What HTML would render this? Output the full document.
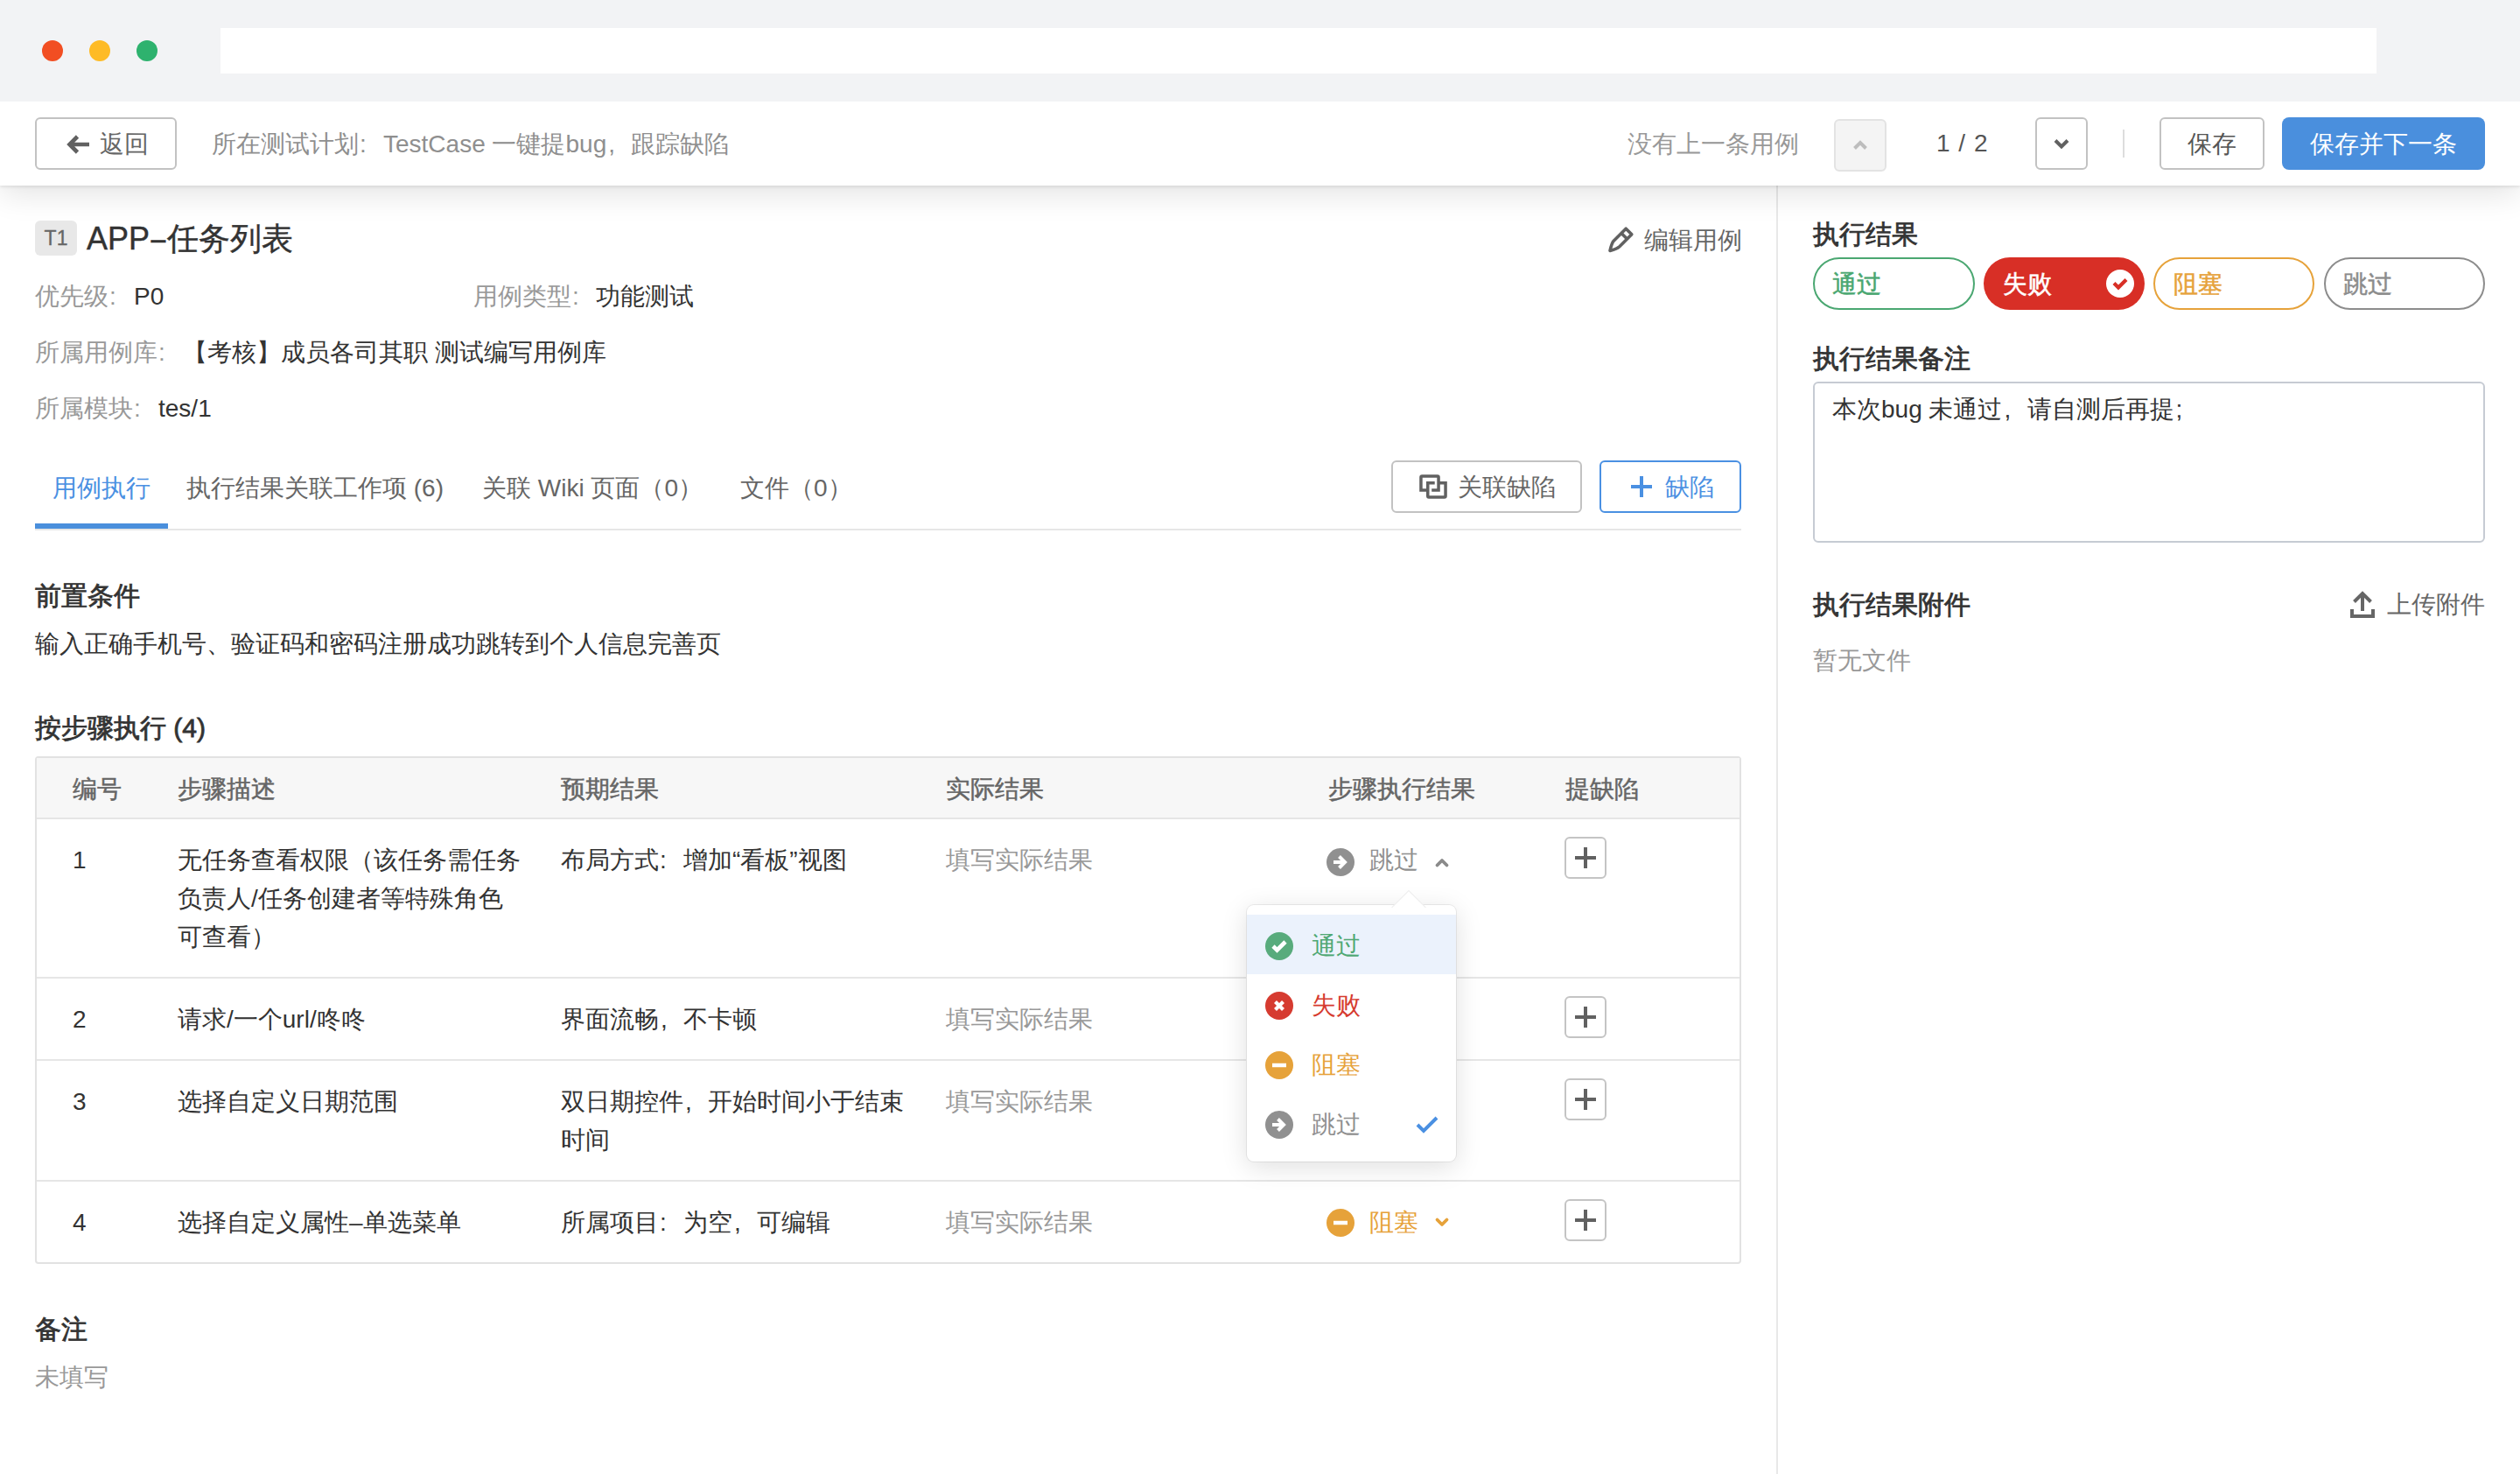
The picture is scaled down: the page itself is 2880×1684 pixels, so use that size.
<!DOCTYPE html>
<html><head><meta charset="utf-8">
<style>
html,body{margin:0;padding:0;}
body{width:2880px;height:1684px;overflow:hidden;position:relative;background:#fff;font-family:"Liberation Sans",sans-serif;font-size:28px;color:#333;}
.a{position:absolute;}
.t{position:absolute;line-height:40px;white-space:nowrap;}
.b{font-weight:bold;}
.h{font-size:30px;-webkit-text-stroke:0.8px currentColor;}
.md{-webkit-text-stroke:0.5px currentColor;}
.cl{display:inline-block;width:28px;text-align:left;text-indent:1px;}
.cm{display:inline-block;width:28px;text-align:left;text-indent:2px;}
.g{color:#999;}
.m{color:#666;}
.btn{position:absolute;box-sizing:border-box;border:2px solid #c2c2c2;border-radius:6px;background:#fff;}
svg{position:absolute;overflow:visible;}
</style></head><body>

<!-- browser chrome -->
<div class="a" style="left:0;top:0;width:2880px;height:116px;background:#f2f3f5;z-index:4;">
<div class="a" style="left:48px;top:46px;width:24px;height:24px;border-radius:50%;background:#f24e22;"></div>
<div class="a" style="left:102px;top:46px;width:24px;height:24px;border-radius:50%;background:#febb26;"></div>
<div class="a" style="left:156px;top:46px;width:24px;height:24px;border-radius:50%;background:#2eb26e;"></div>
<div class="a" style="left:252px;top:32px;width:2464px;height:52px;background:#fff;"></div>
</div>

<!-- header bar -->
<div class="a" style="left:0;top:116px;width:2880px;height:96px;background:#fff;box-shadow:0 2px 3px rgba(0,0,0,0.08), 0 8px 36px rgba(0,0,0,0.12);z-index:2;">
</div>
<div class="a" style="left:0;top:116px;width:2880px;height:96px;z-index:3;">
  <div class="btn" style="left:40px;top:18px;width:162px;height:60px;"></div>
  <svg style="left:75px;top:37px" width="28" height="24" viewBox="0 0 28 24"><path d="M27 12H5 M13.5 3L4.5 12L13.5 21" fill="none" stroke="#616161" stroke-width="4.6"/></svg>
  <div class="t m" style="left:114px;top:29px;">返回</div>
  <div class="t" style="left:242px;top:29px;color:#8f8f8f;">所在测试计划<span class="cl">:</span>TestCase 一键提bug<span class="cm">,</span>跟踪缺陷</div>
  <div class="t g" style="left:1860px;top:29px;">没有上一条用例</div>
  <div class="btn" style="left:2096px;top:20px;width:60px;height:60px;background:#f4f4f4;border-color:#e3e3e3;"></div>
  <svg style="left:2110px;top:38px" width="32" height="40" viewBox="0 0 32 40"><path d="M9.5 15.5L16 9L22.5 15.5" fill="none" stroke="#bdbdbd" stroke-width="4"/></svg>
  <div class="t" style="left:2213px;top:28px;color:#555;word-spacing:2px;">1 / 2</div>
  <div class="btn" style="left:2326px;top:18px;width:60px;height:60px;border-color:#c2c2c2;"></div>
  <svg style="left:2340px;top:34px" width="32" height="40" viewBox="0 0 32 40"><path d="M9 10.5L16 17.5L23 10.5" fill="none" stroke="#616161" stroke-width="4"/></svg>
  <div class="a" style="left:2426px;top:32px;width:2px;height:32px;background:#ddd;"></div>
  <div class="btn" style="left:2468px;top:18px;width:120px;height:60px;border-color:#c2c2c2;"></div>
  <div class="t" style="left:2500px;top:29px;color:#555;">保存</div>
  <div class="a" style="left:2608px;top:18px;width:232px;height:60px;border-radius:8px;background:#4a8fdd;"></div>
  <div class="t" style="left:2640px;top:29px;color:#fff;">保存并下一条</div>
</div>

<!-- vertical divider -->
<div class="a" style="left:2030px;top:212px;width:2px;height:1472px;background:#e8e8e8;"></div>

<!-- LEFT CONTENT -->
<div class="a" style="left:40px;top:252px;width:48px;height:40px;border-radius:6px;background:#e8e8e8;"></div>
<div class="t" style="left:40px;top:252px;width:48px;text-align:center;font-size:23px;color:#666;-webkit-text-stroke:0.3px #666;">T1</div>
<div class="t md" style="left:99px;top:253px;font-size:36px;color:#333;-webkit-text-stroke-width:0.4px;">APP<span style="display:inline-block;transform:scaleX(0.84);">–</span>任务列表</div>

<svg style="left:1830px;top:252px" width="45" height="42" viewBox="0 0 45 42"><path d="M28.2 9.2L34.8 15.8L20.8 29.8C18.5 32 14 33.4 10 34.4C10.9 30.5 12 25.8 14.2 23.2Z M23 14.4L29.6 21" fill="none" stroke="#616161" stroke-width="3.6" stroke-linejoin="round"/></svg>
<div class="t m" style="left:1879px;top:255px;">编辑用例</div>

<div class="t g" style="left:40px;top:319px;">优先级<span class="cl">:</span></div>
<div class="t" style="left:153px;top:319px;">P0</div>
<div class="t g" style="left:541px;top:319px;">用例类型<span class="cl">:</span></div>
<div class="t" style="left:681px;top:319px;">功能测试</div>
<div class="t g" style="left:40px;top:383px;">所属用例库<span class="cl">:</span></div>
<div class="t" style="left:209px;top:383px;">【考核】成员各司其职 测试编写用例库</div>
<div class="t g" style="left:40px;top:447px;">所属模块<span class="cl">:</span></div>
<div class="t" style="left:181px;top:447px;">tes/1</div>

<!-- tabs -->
<div class="t" style="left:60px;top:538px;color:#4a90e2;">用例执行</div>
<div class="t m" style="left:213px;top:538px;">执行结果关联工作项 (6)</div>
<div class="t m" style="left:551px;top:538px;">关联 Wiki 页面（0）</div>
<div class="t m" style="left:846px;top:538px;">文件（0）</div>
<div class="a" style="left:40px;top:604px;width:1950px;height:2px;background:#e6e6e6;"></div>
<div class="a" style="left:40px;top:598px;width:152px;height:6px;background:#4a8fdc;"></div>

<div class="btn" style="left:1590px;top:526px;width:218px;height:60px;"></div>
<svg style="left:1615px;top:535px" width="45" height="40" viewBox="0 0 45 40"><path d="M15 24.95H8.95V10.2Q8.95 8.95 10.2 8.95H27.8Q29.05 8.95 29.05 10.2V24.95H21.2 M24.7 16.75H16.75V31.7Q16.75 32.95 18 32.95H35.8Q37.05 32.95 37.05 31.7V16.75H30.8" fill="none" stroke="#616161" stroke-width="3.5"/></svg>
<div class="t m" style="left:1666px;top:537px;">关联缺陷</div>
<div class="btn" style="left:1828px;top:526px;width:162px;height:60px;border-color:#4a90e2;"></div>
<svg style="left:1864px;top:544px" width="24" height="24" viewBox="0 0 24 24"><path d="M12 0V24 M0 12H24" fill="none" stroke="#4a90e2" stroke-width="4"/></svg>
<div class="t" style="left:1903px;top:537px;color:#4a90e2;">缺陷</div>

<!-- sections -->
<div class="t h" style="left:40px;top:661px;">前置条件</div>
<div class="t" style="left:40px;top:716px;">输入正确手机号、验证码和密码注册成功跳转到个人信息完善页</div>
<div class="t h" style="left:40px;top:812px;">按步骤执行 (4)</div>

<!-- table -->
<div class="a" style="left:40px;top:864px;width:1950px;height:580px;box-sizing:border-box;border:2px solid #e2e2e2;border-radius:4px;"></div>
<div class="a" style="left:42px;top:866px;width:1946px;height:68px;background:#f7f7f7;"></div>
<div class="a" style="left:42px;top:934px;width:1946px;height:2px;background:#e6e6e6;"></div>
<div class="a" style="left:42px;top:1116px;width:1946px;height:2px;background:#e6e6e6;"></div>
<div class="a" style="left:42px;top:1210px;width:1946px;height:2px;background:#e6e6e6;"></div>
<div class="a" style="left:42px;top:1348px;width:1946px;height:2px;background:#e6e6e6;"></div>

<div class="t md m" style="left:83px;top:882px;">编号</div>
<div class="t md m" style="left:203px;top:882px;">步骤描述</div>
<div class="t md m" style="left:641px;top:882px;">预期结果</div>
<div class="t md m" style="left:1081px;top:882px;">实际结果</div>
<div class="t md m" style="left:1518px;top:882px;">步骤执行结果</div>
<div class="t md m" style="left:1789px;top:882px;">提缺陷</div>

<div class="t" style="left:83px;top:963px;">1</div>
<div class="a" style="left:203px;top:963px;line-height:44px;top:961px;">无任务查看权限（该任务需任务<br>负责人/任务创建者等特殊角色<br>可查看）</div>
<div class="t" style="left:641px;top:963px;">布局方式<span class="cl">:</span>增加“看板”视图</div>
<div class="t g" style="left:1081px;top:963px;">填写实际结果</div>

<div class="t" style="left:83px;top:1145px;">2</div>
<div class="t" style="left:203px;top:1145px;">请求/一个url/咚咚</div>
<div class="t" style="left:641px;top:1145px;">界面流畅<span class="cm">,</span>不卡顿</div>
<div class="t g" style="left:1081px;top:1145px;">填写实际结果</div>

<div class="t" style="left:83px;top:1239px;">3</div>
<div class="t" style="left:203px;top:1239px;">选择自定义日期范围</div>
<div class="a" style="left:641px;top:1237px;line-height:44px;">双日期控件<span class="cm">,</span>开始时间小于结束<br>时间</div>
<div class="t g" style="left:1081px;top:1239px;">填写实际结果</div>

<div class="t" style="left:83px;top:1377px;">4</div>
<div class="t" style="left:203px;top:1377px;">选择自定义属性–单选菜单</div>
<div class="t" style="left:641px;top:1377px;">所属项目<span class="cl">:</span>为空<span class="cm">,</span>可编辑</div>
<div class="t g" style="left:1081px;top:1377px;">填写实际结果</div>

<!-- plus buttons -->
<div class="btn" style="left:1788px;top:956px;width:48px;height:48px;border-color:#c4c4c4;border-radius:6px;"></div>
<svg style="left:1799px;top:967px" width="26" height="26" viewBox="0 0 26 26"><path d="M13 1V25 M1 13H25" fill="none" stroke="#616161" stroke-width="4"/></svg>
<div class="btn" style="left:1788px;top:1138px;width:48px;height:48px;border-color:#c4c4c4;border-radius:6px;"></div>
<svg style="left:1799px;top:1149px" width="26" height="26" viewBox="0 0 26 26"><path d="M13 1V25 M1 13H25" fill="none" stroke="#616161" stroke-width="4"/></svg>
<div class="btn" style="left:1788px;top:1232px;width:48px;height:48px;border-color:#c4c4c4;border-radius:6px;"></div>
<svg style="left:1799px;top:1243px" width="26" height="26" viewBox="0 0 26 26"><path d="M13 1V25 M1 13H25" fill="none" stroke="#616161" stroke-width="4"/></svg>
<div class="btn" style="left:1788px;top:1370px;width:48px;height:48px;border-color:#c4c4c4;border-radius:6px;"></div>
<svg style="left:1799px;top:1381px" width="26" height="26" viewBox="0 0 26 26"><path d="M13 1V25 M1 13H25" fill="none" stroke="#616161" stroke-width="4"/></svg>

<!-- row1 status -->
<svg style="left:1516px;top:969px" width="32" height="32" viewBox="0 0 32 32"><circle cx="16" cy="16" r="16" fill="#909090"/><path d="M8 16H21 M14.5 9.5L21 16L14.5 22.5" fill="none" stroke="#fff" stroke-width="4"/></svg>
<div class="t" style="left:1565px;top:963px;color:#909090;">跳过</div>
<svg style="left:1641px;top:980px" width="14" height="10" viewBox="0 0 14 10"><path d="M1.5 8.5L7 3L12.5 8.5" fill="none" stroke="#8a8a8a" stroke-width="3.8" stroke-linecap="round" stroke-linejoin="round"/></svg>

<!-- row4 status -->
<svg style="left:1516px;top:1381px" width="32" height="32" viewBox="0 0 32 32"><circle cx="16" cy="16" r="16" fill="#e6a23a"/><path d="M8 16H24" fill="none" stroke="#fff" stroke-width="4.5"/></svg>
<div class="t" style="left:1565px;top:1377px;color:#e6a23a;">阻塞</div>
<svg style="left:1641px;top:1392px" width="14" height="10" viewBox="0 0 14 10"><path d="M1.5 1.5L7 7L12.5 1.5" fill="none" stroke="#e6a23a" stroke-width="3.8" stroke-linecap="round" stroke-linejoin="round"/></svg>

<!-- dropdown menu -->
<div class="a" style="left:1425px;top:1034px;width:239px;height:293px;background:#fff;border-radius:8px;box-shadow:0 6px 30px rgba(0,0,0,0.13),0 0 0 1px #eee;z-index:5;"></div>
<div class="a" style="left:1596px;top:1024px;width:28px;height:28px;background:#fff;transform:rotate(45deg);box-shadow:-1px -1px 0 #eee;z-index:6;"></div>
<div class="a" style="left:1425px;top:1035px;width:239px;height:292px;z-index:7;">
  <div class="a" style="left:0;top:10px;width:239px;height:68px;background:#ebf2fc;"></div>
  <svg style="left:21px;top:30px" width="32" height="32" viewBox="0 0 32 32"><circle cx="16" cy="16" r="16" fill="#58ab7c"/><path d="M9 16L13.5 20.5L23 11" fill="none" stroke="#fff" stroke-width="4.6"/></svg>
  <div class="t" style="left:74px;top:26px;color:#4fa874;">通过</div>
  <svg style="left:21px;top:98px" width="32" height="32" viewBox="0 0 32 32"><circle cx="16" cy="16" r="16" fill="#d63b30"/><path d="M11.5 11.5L20.5 20.5 M20.5 11.5L11.5 20.5" fill="none" stroke="#fff" stroke-width="4.2"/></svg>
  <div class="t" style="left:74px;top:94px;color:#d63b30;">失败</div>
  <svg style="left:21px;top:166px" width="32" height="32" viewBox="0 0 32 32"><circle cx="16" cy="16" r="16" fill="#e6a23a"/><path d="M8 16H24" fill="none" stroke="#fff" stroke-width="4.5"/></svg>
  <div class="t" style="left:74px;top:162px;color:#e6a23a;">阻塞</div>
  <svg style="left:21px;top:234px" width="32" height="32" viewBox="0 0 32 32"><circle cx="16" cy="16" r="16" fill="#909090"/><path d="M8 16H21 M14.5 9.5L21 16L14.5 22.5" fill="none" stroke="#fff" stroke-width="4"/></svg>
  <div class="t" style="left:74px;top:230px;color:#909090;">跳过</div>
  <svg style="left:193px;top:240px" width="26" height="20" viewBox="0 0 26 20"><path d="M2 10L9 17L24 2" fill="none" stroke="#4a90e2" stroke-width="4"/></svg>
</div>

<!-- RIGHT PANEL -->
<div class="t h" style="left:2072px;top:248px;">执行结果</div>
<div class="btn" style="left:2072px;top:294px;width:185px;height:60px;border-radius:30px;border-color:#4aa771;"></div>
<div class="t md" style="left:2094px;top:305px;color:#4aa771;">通过</div>
<div class="a" style="left:2267px;top:294px;width:184px;height:60px;border-radius:30px;background:#d82f26;"></div>
<div class="t md" style="left:2289px;top:305px;color:#fff;">失败</div>
<svg style="left:2407px;top:308px" width="32" height="32" viewBox="0 0 32 32"><circle cx="16" cy="16" r="16" fill="#fff"/><path d="M9 15.5L14 20.5L23 11.5" fill="none" stroke="#d82f26" stroke-width="4.2"/></svg>
<div class="btn" style="left:2461px;top:294px;width:184px;height:60px;border-radius:30px;border-color:#e6a23a;"></div>
<div class="t md" style="left:2484px;top:305px;color:#e6a23a;">阻塞</div>
<div class="btn" style="left:2656px;top:294px;width:184px;height:60px;border-radius:30px;border-color:#8c8c8c;"></div>
<div class="t md" style="left:2678px;top:305px;color:#8c8c8c;">跳过</div>

<div class="t h" style="left:2072px;top:390px;">执行结果备注</div>
<div class="btn" style="left:2072px;top:436px;width:768px;height:184px;border-color:#c6cbd3;border-radius:6px;"></div>
<div class="t" style="left:2094px;top:448px;">本次bug 未通过<span class="cm">,</span>请自测后再提<span class="cm">;</span></div>

<div class="t h" style="left:2072px;top:671px;">执行结果附件</div>
<svg style="left:2686px;top:675px" width="28" height="31" viewBox="0 0 28 31"><path d="M14 23V3 M4.5 12.5L14 3L23.5 12.5" fill="none" stroke="#666" stroke-width="4"/><path d="M2 21V29H26V21" fill="none" stroke="#666" stroke-width="4"/></svg>
<div class="t m" style="left:2728px;top:671px;">上传附件</div>
<div class="t g" style="left:2072px;top:735px;">暂无文件</div>

<!-- bottom remarks -->
<div class="t h" style="left:40px;top:1499px;">备注</div>
<div class="t g" style="left:40px;top:1554px;">未填写</div>

</body></html>
